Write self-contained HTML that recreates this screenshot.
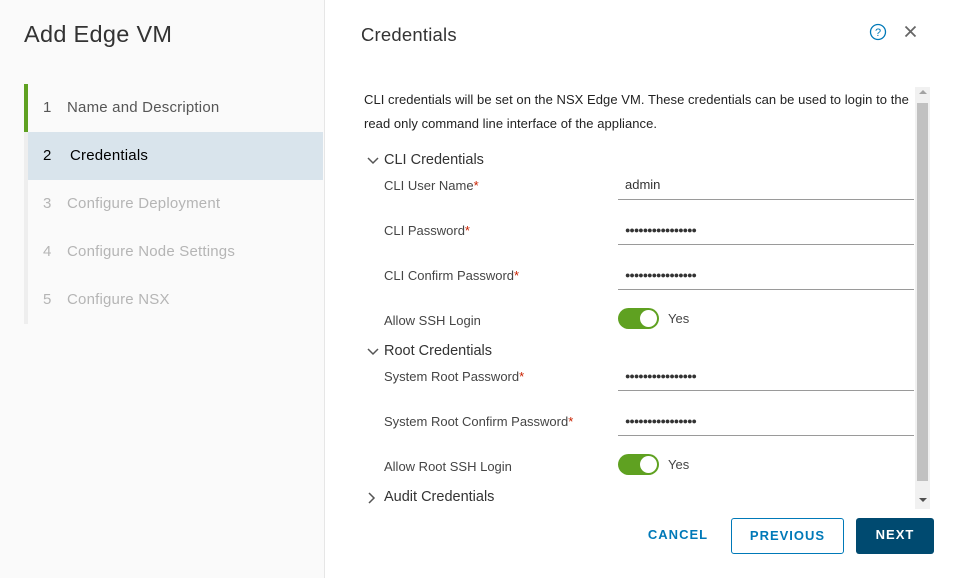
<!DOCTYPE html><html><head><style>
*{margin:0;padding:0;box-sizing:border-box}
body{width:958px;height:578px;background:#fff;font-family:"Liberation Sans",sans-serif;position:relative;overflow:hidden;color:#333}
.a{position:absolute;white-space:nowrap}
.left{position:absolute;left:0;top:0;width:325px;height:578px;background:#fafafa;border-right:1px solid #e6e6e6}
.nav{position:absolute;left:24px;width:299px;height:48px;font-size:15px;line-height:48px;color:#565656;letter-spacing:0.2px}
.nav b{font-weight:normal;display:inline-block;width:43px;padding-left:19px}
.lbl{font-size:13px;color:#454545}
.lbl i{color:#c92100;font-style:normal}
.inp{position:absolute;left:618px;width:296px;border-bottom:1px solid #9a9a9a;height:28px;font-size:13px;padding-left:7px;line-height:26px;color:#333}
.tog{position:absolute;left:618px;width:41px;height:21px;border-radius:11px;background:#5fa121}
.tog:after{content:"";position:absolute;right:2px;top:2px;width:17px;height:17px;border-radius:50%;background:#fff}
.btn{position:absolute;top:518px;height:36px;font-size:13px;font-weight:bold;letter-spacing:1px;line-height:34px;text-align:center;border-radius:3px}
</style></head><body>
<div class="left">
<div class="a" style="left:24px;top:21px;font-size:23.5px;color:#333;letter-spacing:0.3px">Add Edge VM</div>
<div style="position:absolute;left:24px;top:84px;width:4px;height:48px;background:#5fa121"></div>
<div style="position:absolute;left:24px;top:132px;width:4px;height:192px;background:#eee"></div>
<div class="nav" style="top:84px;left:24px"><b>1</b>Name and Description</div>
<div class="nav" style="top:132px;left:28px;width:295px;background:#d9e4ec;color:#000"><b style="padding-left:15px;width:42px">2</b>Credentials</div>
<div class="nav" style="top:180px;color:#b5b5b5"><b>3</b>Configure Deployment</div>
<div class="nav" style="top:228px;color:#b5b5b5"><b>4</b>Configure Node Settings</div>
<div class="nav" style="top:276px;color:#b5b5b5"><b>5</b>Configure NSX</div>
</div>
<div class="a" style="left:361px;top:24px;font-size:18.5px;color:#333;letter-spacing:0.2px">Credentials</div>
<svg class="a" style="left:869px;top:23px" width="18" height="18"><circle cx="9" cy="9" r="7.5" fill="none" stroke="#0079b8" stroke-width="1.3"/><text x="9" y="13" font-size="11" text-anchor="middle" fill="#0079b8" font-family="Liberation Sans">?</text></svg>
<svg class="a" style="left:904px;top:25px" width="13" height="13"><path d="M1.5 1.5L11.5 11.5M11.5 1.5L1.5 11.5" stroke="#666" stroke-width="1.8"/></svg>
<div class="a" style="left:364px;top:88px;font-size:13px;line-height:24px;color:#222;letter-spacing:0.05px">CLI credentials will be set on the NSX Edge VM. These credentials can be used to login to the<br>read only command line interface of the appliance.</div>
<div style="position:absolute;left:915px;top:87px;width:15px;height:422px;background:#f1f1f1"></div>
<div style="position:absolute;left:917px;top:103px;width:11px;height:378px;background:#c1c1c1"></div>
<div class="a" style="left:919px;top:90px;border:4px solid transparent;border-bottom:4px solid #a3a3a3;border-top:0"></div>
<div class="a" style="left:919px;top:498px;border:4px solid transparent;border-top:4px solid #505050;border-bottom:0"></div>
<svg class="a" style="left:367px;top:156px" width="12" height="10"><path d="M1 2l5 5 5-5" fill="none" stroke="#555" stroke-width="1.5"/></svg>
<div class="a" style="left:384px;top:152px;font-size:14.5px;color:#333">CLI Credentials</div>
<div class="a lbl" style="left:384px;top:178px">CLI User Name<i>*</i></div>
<div class="inp" style="top:172px">admin</div>
<div class="a lbl" style="left:384px;top:223px">CLI Password<i>*</i></div>
<div class="inp" style="top:217px;font-size:9px;letter-spacing:-1px">●●●●●●●●●●●●●●●●</div>
<div class="a lbl" style="left:384px;top:268px">CLI Confirm Password<i>*</i></div>
<div class="inp" style="top:262px;font-size:9px;letter-spacing:-1px">●●●●●●●●●●●●●●●●</div>
<div class="a lbl" style="left:384px;top:313px">Allow SSH Login</div>
<div class="tog" style="top:308px"></div>
<div class="a lbl" style="left:668px;top:311px">Yes</div>
<svg class="a" style="left:367px;top:347px" width="12" height="10"><path d="M1 2l5 5 5-5" fill="none" stroke="#555" stroke-width="1.5"/></svg>
<div class="a" style="left:384px;top:343px;font-size:14.5px;color:#333">Root Credentials</div>
<div class="a lbl" style="left:384px;top:369px">System Root Password<i>*</i></div>
<div class="inp" style="top:363px;font-size:9px;letter-spacing:-1px">●●●●●●●●●●●●●●●●</div>
<div class="a lbl" style="left:384px;top:414px">System Root Confirm Password<i>*</i></div>
<div class="inp" style="top:408px;font-size:9px;letter-spacing:-1px">●●●●●●●●●●●●●●●●</div>
<div class="a lbl" style="left:384px;top:459px">Allow Root SSH Login</div>
<div class="tog" style="top:454px"></div>
<div class="a lbl" style="left:668px;top:457px">Yes</div>
<svg class="a" style="left:366px;top:492px" width="10" height="12"><path d="M3 1l5 5-5 5" fill="none" stroke="#555" stroke-width="1.5"/></svg>
<div class="a" style="left:384px;top:489px;font-size:14.5px;color:#333">Audit Credentials</div>
<div class="btn" style="left:640px;width:76px;color:#0079b8">CANCEL</div>
<div class="btn" style="left:731px;width:113px;color:#0079b8;border:1px solid #0079b8">PREVIOUS</div>
<div class="btn" style="left:856px;width:78px;color:#fff;background:#004a70">NEXT</div>
</body></html>
